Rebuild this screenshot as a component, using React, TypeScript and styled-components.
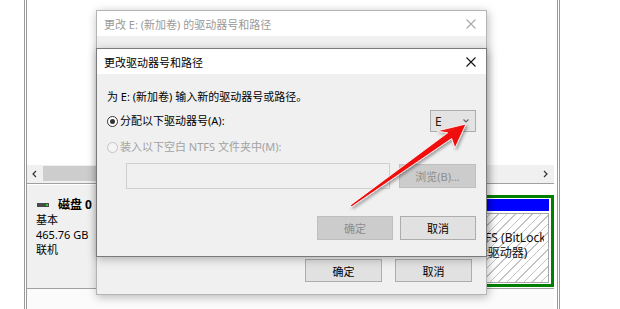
import React from 'react';
import styled, { createGlobalStyle } from 'styled-components';

const GlobalStyle = createGlobalStyle`
  html, body { margin: 0; padding: 0; background: #fff; }
  body {
    font-family: "Noto Sans", "Noto Sans CJK SC", sans-serif;
    font-size: 11px;
    color: #000;
  }
`;

// desktop surface
const Screen = styled.div`
  position: relative;
  width: 620px;
  height: 309px;
  overflow: hidden;
  background: #fff;
  padding-left: 24px;
  box-sizing: border-box;
`;

// disk management window behind the dialogs
const MainWindow = styled.div`
  width: 536px;
  height: 100%;
  box-sizing: border-box;
  border-left: 3px double #9a9a9a;
  border-right: 3px double #9a9a9a;
  display: flex;
  flex-direction: column;
`;

const VolumeList = styled.div`
  height: 165px;
  flex: none;
`;

const ScrollBar = styled.div`
  height: 18px;
  margin-right: 3px;
  display: flex;
  border-bottom: 1px solid #a0a0a0;
  background: #f0f0f0;
`;

const ScrollArrow = styled.div`
  width: 16px;
  display: flex;
  align-items: center;
  justify-content: center;
  background: #f0f0f0;
`;

const ScrollThumb = styled.div`
  width: 300px;
  background: #cdcdcd;
  margin: 1px 0 2px;
`;

const ScrollTrack = styled.div`
  flex: 1;
`;

const DiskRow = styled.div`
  height: 103px;
  margin-top: 1px;
  margin-right: 3px;
  display: flex;
  border-bottom: 1px solid #a0a0a0;
`;

const DiskLabel = styled.div`
  width: 120px;
  background: #f0f0f0;
  padding: 12px 0 0 9px;
  box-sizing: border-box;
  line-height: 15px;
`;

const DiskName = styled.div`
  display: flex;
  align-items: center;
  gap: 9px;
  padding-left: 1px;
  font-weight: bold;
  font-size: 12px;
`;

const DiskIcon = styled.span`
  position: relative;
  width: 12px;
  height: 4px;
  background: #4a4a4a;
  &::after {
    content: '';
    position: absolute;
    right: 1px;
    top: 1px;
    width: 2px;
    height: 2px;
    background: #2bd12b;
  }
`;

const Partitions = styled.div`
  flex: 1;
  display: flex;
  padding: 10px 0 1px;
  background: #fff;
`;

const Partition = styled.div<{ $width?: number }>`
  ${p => (p.$width ? `width: ${p.$width}px;` : 'flex: 1;')}
  box-sizing: border-box;
  border: 3px solid ${p => (p.$width ? '#008000' : '#ffffff')};
  padding: 1px 2px 1px 1px;
  display: flex;
  flex-direction: column;
  gap: 2px;
`;

const VolumeBar = styled.div`
  height: 12px;
  background: #0000ff;
`;

const Hatch = styled.div`
  flex: 1;
  border: 1px solid #a8a8a8;
  background: repeating-linear-gradient(135deg, #ffffff 0 5px, #c4c4c4 5px 6px);
  padding: 1px 4px 0 3px;
`;

const HatchText = styled.div`
  font-size: 12px;
  line-height: 15px;
  overflow: hidden;
  white-space: nowrap;
  color: #111;
`;

const Filler = styled.div`
  flex: 1;
  margin-right: 3px;
  background: #fbfbfb;
`;

// dialog windows
const Dialog = styled.div<{ $top: number; $height: number; $active?: boolean }>`
  position: absolute;
  left: 96px;
  top: ${p => p.$top}px;
  width: 391px;
  height: ${p => p.$height}px;
  box-sizing: border-box;
  border: 1px solid ${p => (p.$active ? '#7a7a7a' : '#b4b4b4')};
  background: #f0f0f0;
  box-shadow: 1px 2px 9px rgba(0, 0, 0, 0.28);
  display: flex;
  flex-direction: column;
`;

const TitleBar = styled.div<{ $active?: boolean }>`
  height: 25px;
  flex: none;
  background: #fff;
  display: flex;
  align-items: center;
  justify-content: space-between;
  padding-left: 7px;
  color: ${p => (p.$active ? '#000' : '#9a9a9a')};
  font-size: 11px;
`;

const CloseBox = styled.div`
  width: 30px;
  height: 25px;
  display: flex;
  align-items: center;
  justify-content: center;
`;

const BackBody = styled.div`
  flex: 1;
  display: flex;
  align-items: flex-end;
  justify-content: flex-end;
  gap: 13px;
  padding: 0 14px 12px 0;
`;

const FrontBody = styled.div`
  flex: 1;
  display: flex;
  flex-direction: column;
  padding: 15px 10px 16px 10px;
`;

const Line = styled.div`
  line-height: 16px;
`;

const OptionRow = styled.div<{ $gap: number }>`
  margin-top: ${p => p.$gap}px;
  display: flex;
  align-items: center;
  justify-content: space-between;
`;

const RadioLabel = styled.label<{ $disabled?: boolean }>`
  display: flex;
  align-items: center;
  gap: 2px;
  line-height: 16px;
  color: ${p => (p.$disabled ? '#a2a2a2' : '#000')};
`;

const Radio = styled.span<{ $checked?: boolean; $disabled?: boolean }>`
  position: relative;
  width: 11px;
  height: 11px;
  border-radius: 50%;
  box-sizing: border-box;
  border: 1px solid ${p => (p.$disabled ? '#c4c4c4' : '#333')};
  background: ${p => (p.$disabled ? '#f4f4f4' : '#fff')};
  &::after {
    content: '';
    display: ${p => (p.$checked ? 'block' : 'none')};
    position: absolute;
    left: 2px;
    top: 2px;
    width: 5px;
    height: 5px;
    border-radius: 50%;
    background: #333;
  }
`;

const Select = styled.div`
  width: 46px;
  height: 22px;
  box-sizing: border-box;
  border: 1px solid #adadad;
  background: #e3e3e3;
  display: flex;
  align-items: center;
  justify-content: space-between;
  padding: 0 5px 0 4px;
  font-size: 12px;
  color: #2a1a0a;
`;

const FolderRow = styled.div`
  margin-top: 8px;
  padding-left: 19px;
  display: flex;
  align-items: center;
  gap: 9px;
`;

const PathInput = styled.div`
  width: 264px;
  height: 26px;
  box-sizing: border-box;
  border: 1px solid #cfcfcf;
  background: #f0f0f0;
`;

const ButtonRow = styled.div`
  margin-top: auto;
  display: flex;
  justify-content: flex-end;
  gap: 7px;
`;

const Button = styled.div<{ $disabled?: boolean; $width?: number; $height?: number }>`
  width: ${p => p.$width ?? 76}px;
  height: ${p => p.$height ?? 24}px;
  box-sizing: border-box;
  border: 1px solid ${p => (p.$disabled ? '#bfbfbf' : '#adadad')};
  background: ${p => (p.$disabled ? '#cccccc' : '#e1e1e1')};
  color: ${p => (p.$disabled ? '#8c8c8c' : '#000')};
  display: flex;
  align-items: center;
  justify-content: center;
  font-size: 11px;
`;

const ArrowLayer = styled.svg`
  position: absolute;
  left: 0;
  top: 0;
  width: 620px;
  height: 309px;
  pointer-events: none;
`;

const CloseIcon: React.FC<{ color: string }> = ({ color }) => (
  <svg width="10" height="10" viewBox="0 0 10 10">
    <path d="M0.5 0.5 L9.5 9.5 M9.5 0.5 L0.5 9.5" stroke={color} strokeWidth="1.1" fill="none" />
  </svg>
);

const Chevron: React.FC<{ dir: 'left' | 'right' | 'down' }> = ({ dir }) => {
  const d = dir === 'left' ? 'M5 1 L2 4 L5 7' : dir === 'right' ? 'M2 1 L5 4 L2 7' : 'M1.5 2.5 L4 5 L6.5 2.5';
  return (
    <svg width="8" height="8" viewBox="0 0 8 8">
      <path d={d} stroke={dir === 'down' ? '#666' : '#333'} strokeWidth="1.2" fill="none" />
    </svg>
  );
};

const App: React.FC = () => (
  <Screen>
    <GlobalStyle />
    <MainWindow>
      <VolumeList />
      <ScrollBar>
        <ScrollArrow><Chevron dir="left" /></ScrollArrow>
        <ScrollThumb />
        <ScrollTrack />
        <ScrollArrow><Chevron dir="right" /></ScrollArrow>
      </ScrollBar>
      <DiskRow>
        <DiskLabel>
          <DiskName><DiskIcon />磁盘 0</DiskName>
          <div>基本</div>
          <div>465.76 GB</div>
          <div>联机</div>
        </DiskLabel>
        <Partitions>
          <Partition />
          <Partition $width={153}>
            <VolumeBar />
            <Hatch>
              <HatchText>
                <div><b>新加卷 (E:)</b></div>
                <div>465.76 GB NTFS (BitLocker 已加密)</div>
                <div>状态良好 (逻辑驱动器)</div>
              </HatchText>
            </Hatch>
          </Partition>
        </Partitions>
      </DiskRow>
      <Filler />
    </MainWindow>

    <Dialog $top={10} $height={285}>
      <TitleBar>
        更改 E: (新加卷) 的驱动器号和路径
        <CloseBox><CloseIcon color="#a8a8a8" /></CloseBox>
      </TitleBar>
      <BackBody>
        <Button $width={77} $height={23}>确定</Button>
        <Button $width={77} $height={23}>取消</Button>
      </BackBody>
    </Dialog>

    <Dialog $top={48} $height={209} $active>
      <TitleBar $active>
        更改驱动器号和路径
        <CloseBox><CloseIcon color="#111" /></CloseBox>
      </TitleBar>
      <FrontBody>
        <Line>为 E: (新加卷) 输入新的驱动器号或路径。</Line>
        <OptionRow $gap={5}>
          <RadioLabel><Radio $checked />分配以下驱动器号(A):</RadioLabel>
          <Select>E<Chevron dir="down" /></Select>
        </OptionRow>
        <OptionRow $gap={7}>
          <RadioLabel $disabled><Radio $disabled />装入以下空白 NTFS 文件夹中(M):</RadioLabel>
        </OptionRow>
        <FolderRow>
          <PathInput />
          <Button $disabled $width={77}>浏览(B)...</Button>
        </FolderRow>
        <ButtonRow>
          <Button $disabled>确定</Button>
          <Button>取消</Button>
        </ButtonRow>
      </FrontBody>
    </Dialog>

    <ArrowLayer viewBox="0 0 620 309">
      <defs>
        <linearGradient id="arrowFill" x1="0" y1="0" x2="1" y2="1">
          <stop offset="0" stopColor="#ff3b30" />
          <stop offset="0.5" stopColor="#f01010" />
          <stop offset="1" stopColor="#c80000" />
        </linearGradient>
        <filter id="arrowShadow" x="-10%" y="-10%" width="130%" height="130%">
          <feDropShadow dx="1.5" dy="2" stdDeviation="1.5" floodColor="#000" floodOpacity="0.35" />
        </filter>
      </defs>
      <polygon
        points="466,124 455,148 451.7,138.5 351.6,206.8 350.4,205.2 447.7,132.8 437,131"
        fill="url(#arrowFill)"
        stroke="#ffffff"
        strokeWidth="0.8"
        strokeLinejoin="round"
        filter="url(#arrowShadow)"
      />
    </ArrowLayer>
  </Screen>
);

export default App;
